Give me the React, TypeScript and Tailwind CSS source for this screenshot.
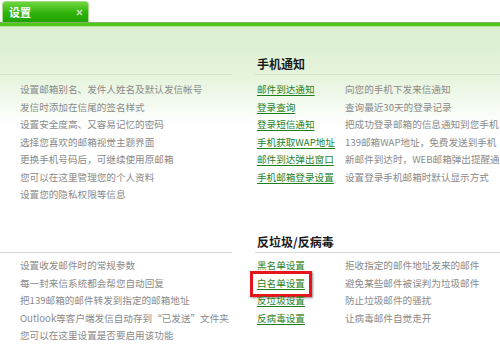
import React from "react";

type LinkRow = {
  link: string;
  desc: string;
  marked?: boolean;
};

type SectionProps = {
  title: string;
  headerHeight: string;
  rowsPad: string;
  notes: string[];
  links: LinkRow[];
};

const Section = ({ title, headerHeight, rowsPad, notes, links }: SectionProps) => {
  return (
    <div className="flex gap-[23px]">
      <div className="w-[232px] shrink-0">
        <div className={`${headerHeight} border-b border-[#d6ddd4]`} />
        <ul className={`${rowsPad} pl-[20px] text-[9.6px] leading-[17.5px] text-[#8a8a8a]`}>
          {notes.map((note) => (
            <li key={note} className="whitespace-nowrap">
              {note}
            </li>
          ))}
        </ul>
      </div>
      <div className="flex-1 min-w-0">
        <div
          className={`${headerHeight} flex items-end border-b border-[#d6ddd4] pb-[2px] pl-[2px]`}
        >
          <h2 className="text-[12px] font-bold leading-[16px] text-[#1a1a1a]">{title}</h2>
        </div>
        <ul className={`${rowsPad} pl-[2px] text-[9.6px] leading-[17.5px]`}>
          {links.map((row) => (
            <li key={row.link} className="flex whitespace-nowrap">
              <div className="w-[88px] shrink-0">
                <a
                  href="#"
                  className="relative inline-block h-[17.5px] text-[#1f7f1f] underline underline-offset-[2px]"
                >
                  {row.link}
                  {row.marked && (
                    <span className="absolute -left-[7px] -right-[7px] -top-[4px] -bottom-[5px] border-[3px] border-[#e8141c] shadow-[1px_1px_2px_rgba(0,0,0,0.45)]" />
                  )}
                </a>
              </div>
              <span className="text-[#8a8a8a]">{row.desc}</span>
            </li>
          ))}
        </ul>
      </div>
    </div>
  );
};

const App = () => {
  return (
    <div className="h-[346px] w-[500px] overflow-hidden bg-white font-['Noto_Sans_CJK_SC','Noto_Sans',sans-serif]">
      <div className="flex h-[22px] items-end pl-[2px]">
        <div className="flex h-[21px] w-[87px] items-center justify-between rounded-t-[4px] border border-b-0 border-[#a9d98f] bg-[linear-gradient(to_bottom,#6fd640,#2fb20a_55%,#1fa300)] pl-[6px] pr-[5px]">
          <span className="text-[11px] font-bold leading-none text-white">设置</span>
          <svg width="7" height="7" viewBox="0 0 7 7" className="mt-[1px]">
            <path d="M1 1L6 6M6 1L1 6" stroke="#c9d9c2" strokeWidth="1.6" />
          </svg>
        </div>
      </div>
      <div className="h-[1px] bg-[#7fb45e]" />
      <div className="h-[3px] bg-[#52c71c]" />
      <div className="h-[1px] bg-[#b3e39a]" />
      <div className="bg-[linear-gradient(to_bottom,#dbefd0_0px,#e3f3da_45px,#ffffff_100px)]">
        <Section
          title="手机通知"
          headerHeight="h-[48px]"
          rowsPad="pt-[6px] h-[129px]"
          notes={[
            "设置邮箱别名、发件人姓名及默认发信帐号",
            "发信时添加在信尾的签名样式",
            "设置安全度高、又容易记忆的密码",
            "选择您喜欢的邮箱视觉主题界面",
            "更换手机号码后，可继续使用原邮箱",
            "您可以在这里管理您的个人资料",
            "设置您的隐私权限等信息",
          ]}
          links={[
            { link: "邮件到达通知", desc: "向您的手机下发来信通知" },
            { link: "登录查询", desc: "查询最近30天的登录记录" },
            { link: "登录短信通知", desc: "把成功登录邮箱的信息通知到您手机" },
            { link: "手机获取WAP地址", desc: "139邮箱WAP地址，免费发送到手机" },
            { link: "邮件到达弹出窗口", desc: "新邮件到达时，WEB邮箱弹出提醒通知" },
            { link: "手机邮箱登录设置", desc: "设置登录手机邮箱时默认显示方式" },
          ]}
        />
      </div>
      <Section
        title="反垃圾/反病毒"
        headerHeight="h-[49px]"
        rowsPad="pt-[4px]"
        notes={[
          "设置收发邮件时的常规参数",
          "每一封来信系统都会帮您自动回复",
          "把139邮箱的邮件转发到指定的邮箱地址",
          "Outlook等客户端发信自动存到\u201c已发送\u201d文件夹",
          "您可以在这里设置是否要启用该功能",
        ]}
        links={[
          { link: "黑名单设置", desc: "拒收指定的邮件地址发来的邮件" },
          { link: "白名单设置", desc: "避免某些邮件被误判为垃圾邮件", marked: true },
          { link: "反垃圾设置", desc: "防止垃圾邮件的骚扰" },
          { link: "反病毒设置", desc: "让病毒邮件自觉走开" },
        ]}
      />
    </div>
  );
};

export default App;
